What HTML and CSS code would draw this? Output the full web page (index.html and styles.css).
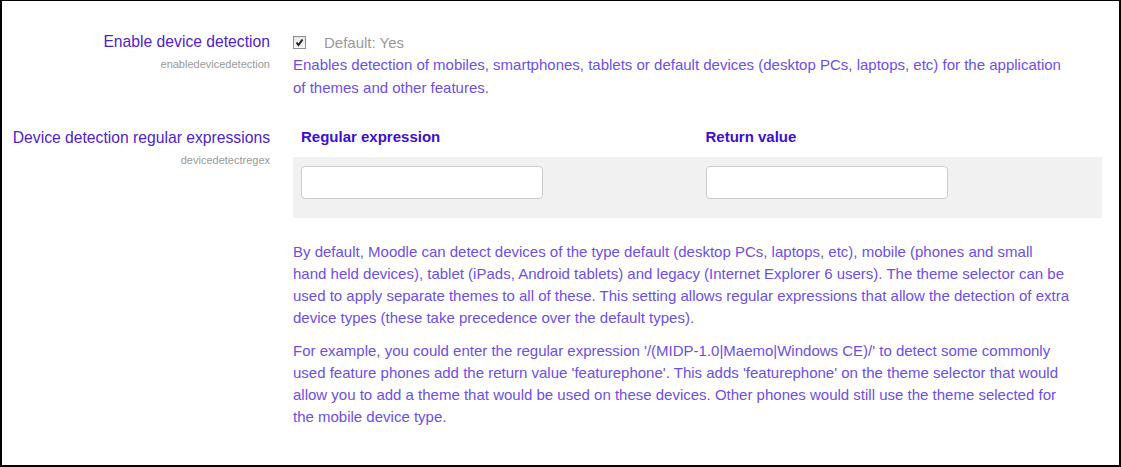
FILE: index.html
```html
<!DOCTYPE html>
<html lang="en">
<head>
    <meta charset="UTF-8">
    <title>Device detection settings</title>
    <link rel="stylesheet" href="styles.css">
</head>
<body>
    <div class="frame">
        <!-- Enable device detection -->
        <div class="setting first">
            <div class="label">
                <label for="enabledevicedetection">Enable device detection</label>
                <span class="name">enabledevicedetection</span>
            </div>
            <div class="field">
                <div class="check-line">
                    <span class="checkbox" id="enabledevicedetection">
                        <svg width="11" height="11" viewBox="0 0 11 11"><path d="M2.5 5.5 L4.5 8 L8.5 2.5" fill="none" stroke="#222" stroke-width="2"/></svg>
                    </span>
                    <span class="default">Default: Yes</span>
                </div>
                <div class="desc">Enables detection of mobiles, smartphones, tablets or default devices (desktop PCs, laptops, etc) for the application of themes and other features.</div>
            </div>
        </div>

        <!-- Device detection regular expressions -->
        <div class="setting second">
            <div class="label">
                <label>Device detection regular expressions</label>
                <span class="name">devicedetectregex</span>
            </div>
            <div class="field">
                <table class="regex">
                    <thead>
                        <tr>
                            <th>Regular expression</th>
                            <th>Return value</th>
                        </tr>
                    </thead>
                    <tbody>
                        <tr>
                            <td><input type="text"></td>
                            <td><input type="text"></td>
                        </tr>
                    </tbody>
                </table>
                <div class="desc long">
                    <p>By default, Moodle can detect devices of the type default (desktop PCs, laptops, etc), mobile (phones and small hand held devices), tablet (iPads, Android tablets) and legacy (Internet Explorer 6 users). The theme selector can be used to apply separate themes to all of these. This setting allows regular expressions that allow the detection of extra device types (these take precedence over the default types).</p>
                    <p>For example, you could enter the regular expression '/(MIDP-1.0|Maemo|Windows CE)/' to detect some commonly used feature phones add the return value 'featurephone'. This adds 'featurephone' on the theme selector that would allow you to add a theme that would be used on these devices. Other phones would still use the theme selected for the mobile device type.</p>
                </div>
            </div>
        </div>
    </div>
</body>
</html>
```

FILE: styles.css
```css
body {
    margin: 0;
    font-family: "Liberation Sans", Arial, sans-serif;
    font-size: 15px;
    background-color: white;
}

.frame {
    height: 467px;
    box-sizing: border-box;
    border-top: 1px solid #000;
    border-left: 2px solid #000;
    border-right: 2px solid #000;
    border-bottom: 2px solid #000;
}

.setting {
    display: grid;
    grid-template-columns: 268px 1fr;
    column-gap: 23px;
}

.setting.first {
    padding-top: 30px;
}

.setting.second {
    padding-top: 28px;
}

.label {
    display: flex;
    flex-direction: column;
    align-items: flex-end;
    text-align: right;
    white-space: nowrap;
}

.label label {
    color: #4f22cc;
    font-size: 15.7px;
    line-height: 22px;
}

.name {
    font-family: "Liberation Sans Narrow", "Liberation Sans", sans-serif;
    font-stretch: condensed;
    font-size: 11px;
    color: #999;
    line-height: 22px;
}

.field {
    padding-right: 17px;
}

.check-line {
    display: flex;
    align-items: center;
    height: 22px;
}

.checkbox {
    display: flex;
    align-items: center;
    justify-content: center;
    width: 11px;
    height: 11px;
    margin-right: 18px;
    border: 1px solid #8e8e8e;
    background: linear-gradient(#e8e8e8, #fafafa);
}

.default {
    color: #999;
}

.desc {
    color: #6d4fe3;
    line-height: 23px;
    max-width: 780px;
}

.regex {
    border-collapse: collapse;
    width: 809px;
    margin-top: -1px;
}

.regex th {
    color: #3d0fcf;
    font-weight: bold;
    text-align: left;
    padding: 0 8px 9px;
    line-height: 22px;
    width: 50%;
}

.regex td {
    background-color: #f1f1f1;
    padding: 9px 8px 19px;
}

.regex input {
    display: block;
    width: 242px;
    height: 33px;
    box-sizing: border-box;
    border: 1px solid #ccc;
    border-radius: 4px;
    margin: 0;
    background: white;
}

.desc.long {
    line-height: 22px;
    padding-top: 23px;
    max-width: 776px;
}

.desc.long p {
    margin: 0 0 11px;
}
```
